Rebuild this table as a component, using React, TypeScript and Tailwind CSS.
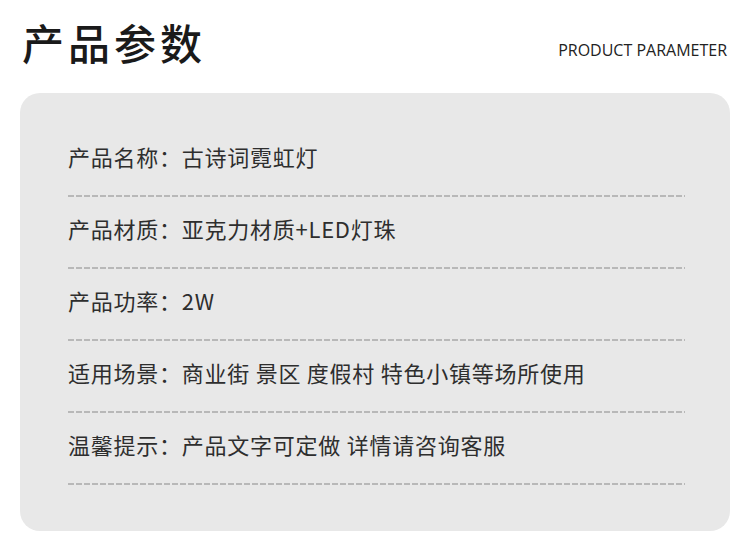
const rows = [
  "产品名称：古诗词霓虹灯",
  "产品材质：亚克力材质+LED灯珠",
  "产品功率：2W",
  "适用场景：商业街 景区 度假村 特色小镇等场所使用",
  "温馨提示：产品文字可定做 详情请咨询客服",
];

export default function App() {
  return (
    <main className="h-[535px] w-[750px] bg-white font-['Noto_Sans_CJK_SC',sans-serif] text-[#2e2e2e]">
      <header className="flex items-end justify-between pl-[22px] pr-[23px] pt-[16px]">
        <h1 className="text-[42px] font-medium leading-[52px] tracking-[4px] text-[#1a1a1a]">
          产品参数
        </h1>
        <p className="mb-[6px] font-['Open_Sans',sans-serif] text-[16px] text-[#222]">
          PRODUCT PARAMETER
        </p>
      </header>

      <section className="mx-[20px] mt-[25px] rounded-[20px] bg-[#e8e8e8] pb-[46px] pl-[48px] pr-[45px] pt-[48px]">
        {rows.map((row, i) => (
          <div key={i} className={i > 0 ? "pt-[16px]" : ""}>
            <p className="text-[22px] leading-[30px] tracking-[0.75px]">{row}</p>
            <div className="mt-[24px] h-[2px] bg-[repeating-linear-gradient(to_right,#b8b8b8_0,#b8b8b8_6px,transparent_6px,transparent_8px)]" />
          </div>
        ))}
      </section>
    </main>
  );
}
